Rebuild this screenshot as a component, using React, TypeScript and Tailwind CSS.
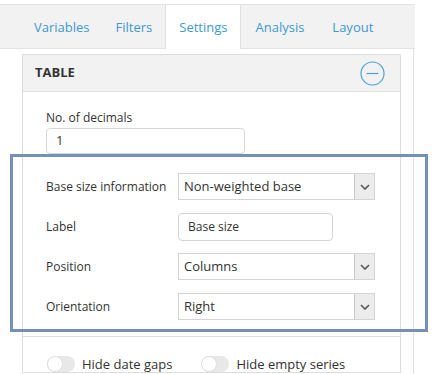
const tabs = ["Variables", "Filters", "Settings", "Analysis", "Layout"];

function Chevron() {
  return (
    <svg width="10" height="6" viewBox="0 0 10 6" fill="none">
      <path d="M1 1l4 4 4-4" stroke="#555" strokeWidth="1.6" />
    </svg>
  );
}

function Select({ value }: { value: string }) {
  return (
    <div className="flex h-[27px] w-[197px] items-stretch border border-[#d4d4d4] bg-white">
      <div className="flex flex-1 items-center pl-[5px] text-[13px] text-[#333]">{value}</div>
      <div className="flex w-[20px] items-center justify-center border-l border-[#c8c8c8] bg-[#ececec]">
        <Chevron />
      </div>
    </div>
  );
}

function Toggle({ label }: { label: string }) {
  return (
    <div className="flex items-center gap-[7px]">
      <div className="relative h-[16px] w-[28px] rounded-full bg-[#e8e8e8]">
        <div className="absolute left-0 top-0 h-[16px] w-[16px] rounded-full border border-[#e0e0e0] bg-white" />
      </div>
      <span className="text-[13px] leading-[16px] text-[#333]">{label}</span>
    </div>
  );
}

export default function App() {
  const rows = [
    { label: "Base size information", value: "Non-weighted base", kind: "select" },
    { label: "Label", value: "Base size", kind: "input" },
    { label: "Position", value: "Columns", kind: "select" },
    { label: "Orientation", value: "Right", kind: "select" },
  ];

  return (
    <div className="relative h-[374px] w-[439px] overflow-hidden bg-white pt-[4px] font-['Open_Sans',sans-serif]">
      {/* tab bar */}
      <div className="flex h-[45px] w-[415px] border-t border-b border-[#e3e3e3] bg-[#f2f2f2] pl-[21px]">
        {tabs.map((t, i) => (
          <div
            key={t}
            className={
              t === "Settings"
                ? "-mb-px flex items-center border-x border-[#e0e0e0] bg-white px-[13px] pt-[2px] text-[13px] text-[#3d99d6]"
                : i > 2
                  ? "flex items-center px-[14px] pt-[2px] text-[13px] text-[#3d99d6]"
                  : "flex items-center px-[13px] pt-[2px] text-[13px] text-[#3d99d6]"
            }
          >
            {t}
          </div>
        ))}
      </div>

      {/* panel */}
      <div className="h-full w-[414px] border-r border-[#e3e3e3] pt-[5px] pl-[22px]">
        <div className="w-[379px] border border-[#dedede]">
          <div className="flex h-[37px] items-center justify-between border-b border-[#dedede] bg-[#f2f2f2] pl-[12px] pr-[15px]">
            <span className="text-[13px] font-bold text-[#333]">TABLE</span>
            <svg width="25" height="25" viewBox="0 0 25 25" fill="none">
              <circle cx="12.5" cy="12.5" r="11.5" stroke="#4ba3da" strokeWidth="1.2" />
              <path d="M6.5 12.5h12" stroke="#4ba3da" strokeWidth="1.2" />
            </svg>
          </div>

          <div className="pl-[23px] pt-[17px]">
            <div className="text-[12px] text-[#333]">No. of decimals</div>
            <div className="mt-[1px] flex h-[26px] w-[199px] items-center rounded-[4px] border border-[#d8d8d8] pl-[9px] text-[13px] text-[#333]">
              1
            </div>

            <div className="mt-[19px] flex flex-col">
              {rows.map((r) => (
                <div key={r.label} className="flex h-[40px] items-start">
                  <div className="flex h-[27px] w-[132px] items-center text-[12px] text-[#333]">{r.label}</div>
                  {r.kind === "select" ? (
                    <Select value={r.value} />
                  ) : (
                    <div className="flex h-[28px] w-[155px] items-center rounded-[4px] border border-[#d4d4d4] pl-[9px] text-[12px] text-[#333]">
                      {r.value}
                    </div>
                  )}
                </div>
              ))}
            </div>
          </div>

          <div className="mt-[3px] border-t border-[#dedede] pl-[24px] pt-[19px]">
            <div className="flex gap-[29px]">
              <Toggle label="Hide date gaps" />
              <Toggle label="Hide empty series" />
            </div>
          </div>
        </div>
      </div>

      {/* highlight annotation */}
      <div className="absolute left-[10px] top-[154px] h-[178px] w-[418px] border-[3px] border-[#7391b9]" />
    </div>
  );
}
